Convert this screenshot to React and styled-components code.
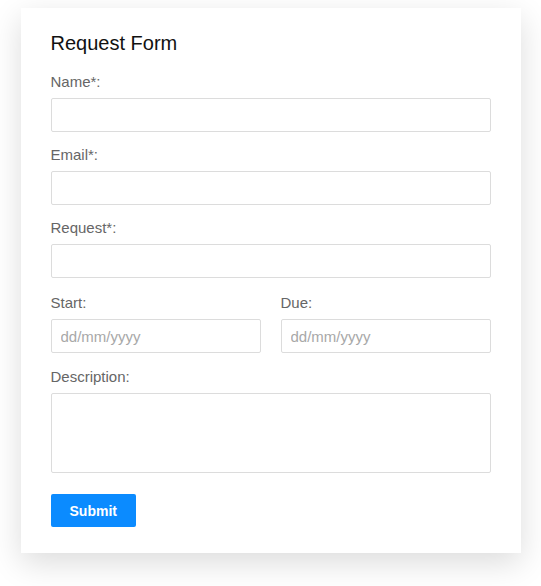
import React from "react";
import styled, { createGlobalStyle } from "styled-components";

const Global = createGlobalStyle`
  html { background: #ffffff; }
  body {
    margin: 0;
    padding: 8px 0 33px;
    min-height: 586px;
    font-family: "Liberation Sans", Arial, Helvetica, sans-serif;
  }
  * { box-sizing: border-box; }
`;

const Card = styled.form`
  width: 500px;
  margin: 0 auto;
  background: #ffffff;
  padding: 24px 30px 26px;
  box-shadow: 0 10px 30px rgba(0, 0, 0, 0.14);
  display: flex;
  flex-direction: column;
`;

const Title = styled.h2`
  margin: 0 0 18px;
  font-size: 20px;
  line-height: 23px;
  font-weight: 400;
  color: #111111;
`;

const Field = styled.div`
  display: flex;
  flex-direction: column;
  margin-top: ${(p) => p.$top || 0}px;
  min-width: 0;
`;

const Row = styled.div`
  display: grid;
  grid-template-columns: 1fr 1fr;
  column-gap: 20px;
  margin-top: ${(p) => p.$top || 0}px;
`;

const Label = styled.label`
  font-size: 15px;
  line-height: 18px;
  color: #666666;
  margin-bottom: 7px;
`;

const Input = styled.input`
  height: 34px;
  width: 100%;
  border: 1px solid #dcdcdc;
  border-radius: 2px;
  padding: 0 9px;
  font-family: inherit;
  font-size: 15px;
  color: #333;
  background: #fff;
  outline: none;
  &::placeholder { color: #a8a8a8; }
`;

const TextArea = styled.textarea`
  height: 80px;
  width: 100%;
  border: 1px solid #dcdcdc;
  border-radius: 2px;
  padding: 8px 9px;
  font-family: inherit;
  font-size: 15px;
  resize: none;
  outline: none;
  display: block;
`;

const Button = styled.button`
  align-self: flex-start;
  margin-top: 21px;
  height: 33px;
  padding: 0 19px;
  border: none;
  border-radius: 2px;
  background: #0b8bff;
  color: #ffffff;
  font-family: inherit;
  font-size: 14px;
  font-weight: 700;
  cursor: pointer;
`;

export default function App() {
  return (
    <>
      <Global />
      <Card onSubmit={(e) => e.preventDefault()}>
        <Title>Request Form</Title>
        <Field>
          <Label>Name*:</Label>
          <Input type="text" />
        </Field>
        <Field $top={14}>
          <Label>Email*:</Label>
          <Input type="text" />
        </Field>
        <Field $top={14}>
          <Label>Request*:</Label>
          <Input type="text" />
        </Field>
        <Row $top={16}>
          <Field>
            <Label>Start:</Label>
            <Input type="text" placeholder="dd/mm/yyyy" />
          </Field>
          <Field>
            <Label>Due:</Label>
            <Input type="text" placeholder="dd/mm/yyyy" />
          </Field>
        </Row>
        <Field $top={15}>
          <Label>Description:</Label>
          <TextArea />
        </Field>
        <Button type="submit">Submit</Button>
      </Card>
    </>
  );
}
